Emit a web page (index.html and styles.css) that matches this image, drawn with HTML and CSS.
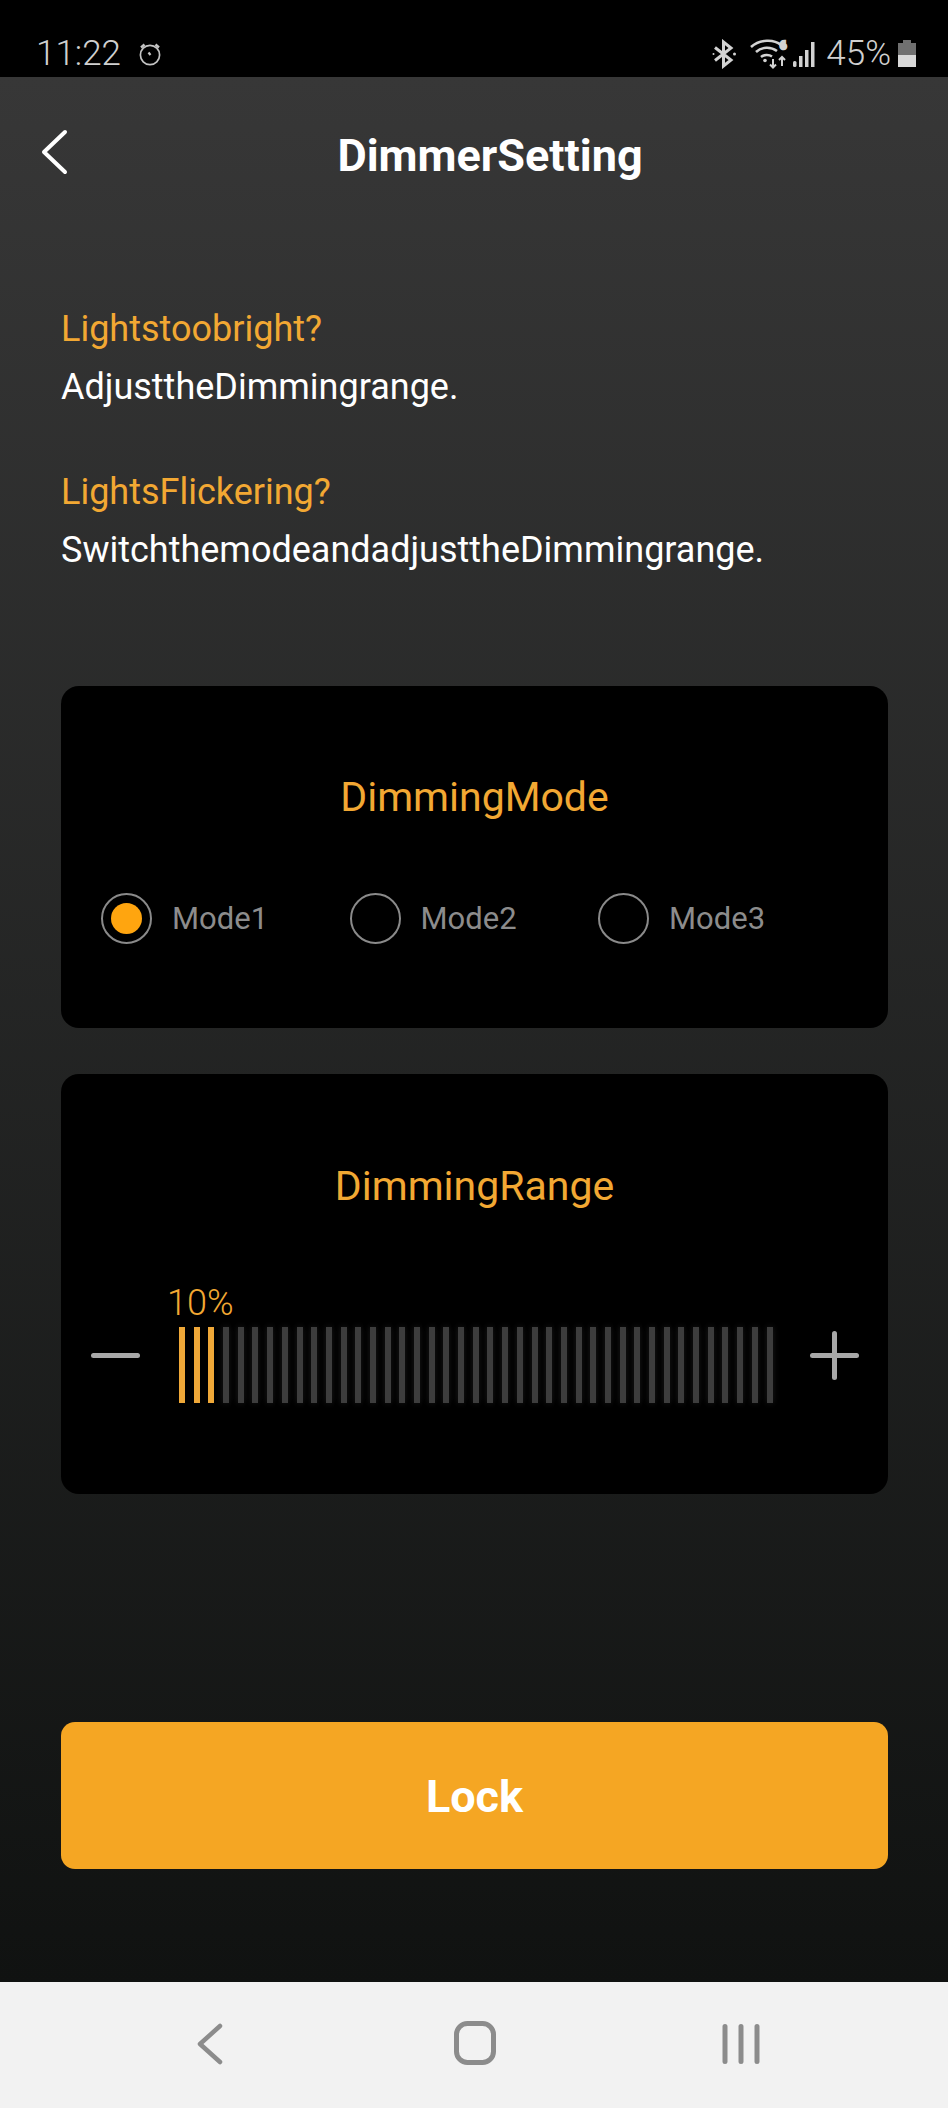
FILE: index.html
```html
<!DOCTYPE html>
<html lang="en">
<head>
<meta charset="utf-8">
<title>DimmerSetting</title>
<link rel="stylesheet" href="styles.css">
</head>
<body>
<div class="phone">
  <header class="status">
    <div class="status-left">
      <span class="time">11:22</span>
      <svg class="ic-alarm" width="24" height="24" viewBox="0 0 24 24" fill="none" stroke="#c4c4c4"><circle cx="12" cy="13" r="9.6" stroke-width="1.7"/><path d="M3 5.5 6.5 2.5M21 5.5 17.5 2.5" stroke-width="2.4"/><path d="M10.5 10.5 12.5 13" stroke-width="2.2"/></svg>
    </div>
    <div class="status-right">
      <svg class="ic-bt" width="26" height="30" viewBox="0 0 26 30" fill="none" stroke="#d2d2d2" stroke-width="3"><path d="M4 8.500 20 21 12.500 27V3L20 9 4 21.500"/><circle cx="2.500" cy="15" r="1" fill="#d2d2d2" stroke="none"/><circle cx="23.500" cy="15" r="1.500" fill="#d2d2d2" stroke="none"/></svg>
      <svg class="ic-wifi" width="40" height="30" viewBox="0 0 38 30" fill="none" stroke="#d2d2d2" stroke-width="2.600"><path d="M1 8C10 0 24 0 31 6"/><path d="M6 13C12 7.500 21 7.500 27 12"/><path d="M11 18C14 15.500 19 15.500 22 17.500"/><circle cx="15" cy="21.500" r="1.800" fill="#d2d2d2" stroke="none"/><path d="M23 20V28M20 25.500 23 28.500 26 25.500M32 27V18M29 21 32 18 35 21" stroke-width="2"/><text class="wifi-six" x="30" y="10">6</text></svg>
      <svg class="ic-signal" width="25" height="28" viewBox="0 0 25 28" fill="#d2d2d2"><rect x="0" y="21" width="3.500" height="6" rx="1.500"/><rect x="6" y="16" width="3.500" height="11"/><rect x="12" y="10" width="3.500" height="17"/><rect x="18" y="2" width="3.500" height="25"/></svg>
      <span class="pct">45%</span>
      <svg class="ic-batt" width="18" height="28" viewBox="0 0 18 28"><rect x="5" y="0" width="8" height="4" fill="#707070"/><rect x="0" y="3" width="18" height="12" fill="#707070"/><rect x="0" y="15" width="18" height="12" fill="#d8d8d8"/></svg>
    </div>
  </header>

  <main class="app">
    <div class="topbar">
      <svg class="back" width="28" height="46" viewBox="0 0 28 46" fill="none" stroke="#fff" stroke-width="4" stroke-linecap="round" stroke-linejoin="round"><path d="M25 3 4 23 25 43"/></svg>
      <h1 class="title">DimmerSetting</h1>
    </div>

    <section class="help">
      <p class="q">Lightstoobright?</p>
      <p class="a">AdjusttheDimmingrange.</p>
      <p class="q q2">LightsFlickering?</p>
      <p class="a">SwitchthemodeandadjusttheDimmingrange.</p>
    </section>

    <section class="card card-mode">
      <h2 class="card-title">DimmingMode</h2>
      <div class="modes">
        <div class="mode"><span class="radio on"></span><span class="mode-label">Mode1</span></div>
        <div class="mode"><span class="radio"></span><span class="mode-label">Mode2</span></div>
        <div class="mode"><span class="radio"></span><span class="mode-label">Mode3</span></div>
      </div>
    </section>

    <section class="card card-range">
      <h2 class="card-title">DimmingRange</h2>
      <div class="slider">
        <span class="pm minus"></span>
        <div class="track">
          <span class="value">10%</span>
          <div class="ticks">
            <i class="t on"></i><i class="t on"></i><i class="t on"></i>
            <i class="t"></i><i class="t"></i><i class="t"></i><i class="t"></i><i class="t"></i><i class="t"></i><i class="t"></i><i class="t"></i><i class="t"></i><i class="t"></i><i class="t"></i><i class="t"></i><i class="t"></i><i class="t"></i><i class="t"></i><i class="t"></i><i class="t"></i><i class="t"></i><i class="t"></i><i class="t"></i><i class="t"></i><i class="t"></i><i class="t"></i><i class="t"></i><i class="t"></i><i class="t"></i><i class="t"></i><i class="t"></i><i class="t"></i><i class="t"></i><i class="t"></i><i class="t"></i><i class="t"></i><i class="t"></i><i class="t"></i><i class="t"></i><i class="t"></i><i class="t"></i>
          </div>
        </div>
        <span class="pm plus"></span>
      </div>
    </section>

    <button class="lock">Lock</button>
  </main>

  <nav class="navbar">
    <svg width="26" height="42" viewBox="0 0 26 42" fill="none" stroke="#8c8c8c" stroke-width="4.500" stroke-linecap="round" stroke-linejoin="round"><path d="M23 3 3 21 23 39"/></svg>
    <svg width="42" height="44" viewBox="0 0 42 44" fill="none" stroke="#8c8c8c" stroke-width="5"><rect x="2.500" y="2.500" width="37" height="39" rx="11"/></svg>
    <svg width="38" height="40" viewBox="0 0 38 40" fill="none" stroke="#8c8c8c" stroke-width="5" stroke-linecap="round"><path d="M3 2.500V37.500M19 2.500V37.500M35 2.500V37.500"/></svg>
  </nav>
</div>
</body>
</html>
```
FILE: styles.css
```css
* { box-sizing: border-box; }
html, body { margin: 0; padding: 0; }
body { width: 948px; height: 2108px; overflow: hidden; font-family: Roboto, "Liberation Sans", sans-serif; background: #000; }
.phone { width: 948px; height: 2108px; display: flex; flex-direction: column; }

.status { height: 77px; flex: none; background: #000; display: flex; justify-content: space-between; align-items: flex-start; padding: 34px 32px 0 36px; color: #d0d0d0; }
.status-left { display: flex; align-items: center; gap: 17px; }
.time { font-size: 35px; line-height: 40px; font-weight: 300; }
.status-right { display: flex; align-items: center; }
.ic-bt { margin-right: 12px; }
.ic-wifi { margin-right: 4px; }
.ic-signal { margin-right: 8px; }
.pct { font-size: 35px; line-height: 40px; font-weight: 300; margin-right: 7px; }
.wifi-six { font: 700 11px Roboto, sans-serif; fill: #d2d2d2; }

.app { height: 1905px; flex: none; background: linear-gradient(#373737, #101211); padding: 0 60px 0 61px; display: flex; flex-direction: column; }
.topbar { height: 80px; margin-top: 39px; margin-left: -61px; margin-right: -60px; padding-left: 32px; display: flex; align-items: center; justify-content: center; position: relative; }
.back { position: absolute; left: 40px; top: 13px; }
.title { margin: 0; font-size: 45px; font-weight: 700; color: #fff; line-height: 76px; }

.help { margin-top: 104px; }
.q, .a { margin: 0; font-size: 36px; line-height: 58px; }
.q { color: #f2a833; }
.a { color: #fff; }
.q2 { margin-top: 47px; }

.card { background: #000; border-radius: 18px; display: flex; flex-direction: column; align-items: center; }
.card-mode { height: 342px; margin-top: 107px; padding-top: 89px; }
.card-range { height: 420px; margin-top: 46px; padding-top: 90px; }
.card-title { margin: 0; font-size: 41px; line-height: 44px; font-weight: 400; color: #f2a833; }

.modes { align-self: stretch; margin-top: 74px; padding-left: 40px; display: flex; }
.mode { width: 248.500px; display: flex; align-items: center; gap: 20px; }
.radio { width: 51px; height: 51px; border-radius: 50%; border: 2.500px solid #8a8a8a; display: flex; align-items: center; justify-content: center; flex: none; }
.radio.on::before { content: ""; width: 31px; height: 31px; border-radius: 50%; background: #ffa50f; }
.mode-label { font-size: 31px; line-height: 50px; color: #8c8c8c; }

.slider { align-self: stretch; height: 110px; margin-top: 85px; padding-left: 30px; display: flex; align-items: flex-end; position: relative; }
.track { margin-left: 39px; width: 594px; position: relative; padding-bottom: 0; }
.value { position: absolute; left: -12px; top: -45px; font-size: 36px; line-height: 42px; font-weight: 300; color: #f2a833; }
.ticks { height: 76px; display: flex; justify-content: space-between; }
.t { width: 6px; height: 76px; background: #3d3d3d; box-shadow: 0 0 6px #1c1c1c; }
.t.on { background: #efa838; box-shadow: none; }
.pm { width: 49px; height: 5px; border-radius: 3px; background: #a8a8a8; margin-bottom: 45px; flex: none; position: relative; }
.plus { margin-left: 37px; }
.plus::after { content: ""; position: absolute; left: 22px; top: -22px; width: 5px; height: 49px; border-radius: 3px; background: #a8a8a8; }

.lock { height: 147px; margin-top: 228px; border: 0; border-radius: 14px; background: #f5a623; color: #fff; font: 700 45px Roboto, sans-serif; padding: 2px 0 0; }

.navbar { height: 126px; flex: none; background: #f2f2f2; display: flex; align-items: center; padding: 0 0 0 197px; }
.navbar svg:nth-child(1) { margin-top: -2px; }
.navbar svg:nth-child(2) { margin-left: 231px; margin-top: -4px; }
.navbar svg:nth-child(3) { margin-left: 226px; margin-top: -2px; }
```
